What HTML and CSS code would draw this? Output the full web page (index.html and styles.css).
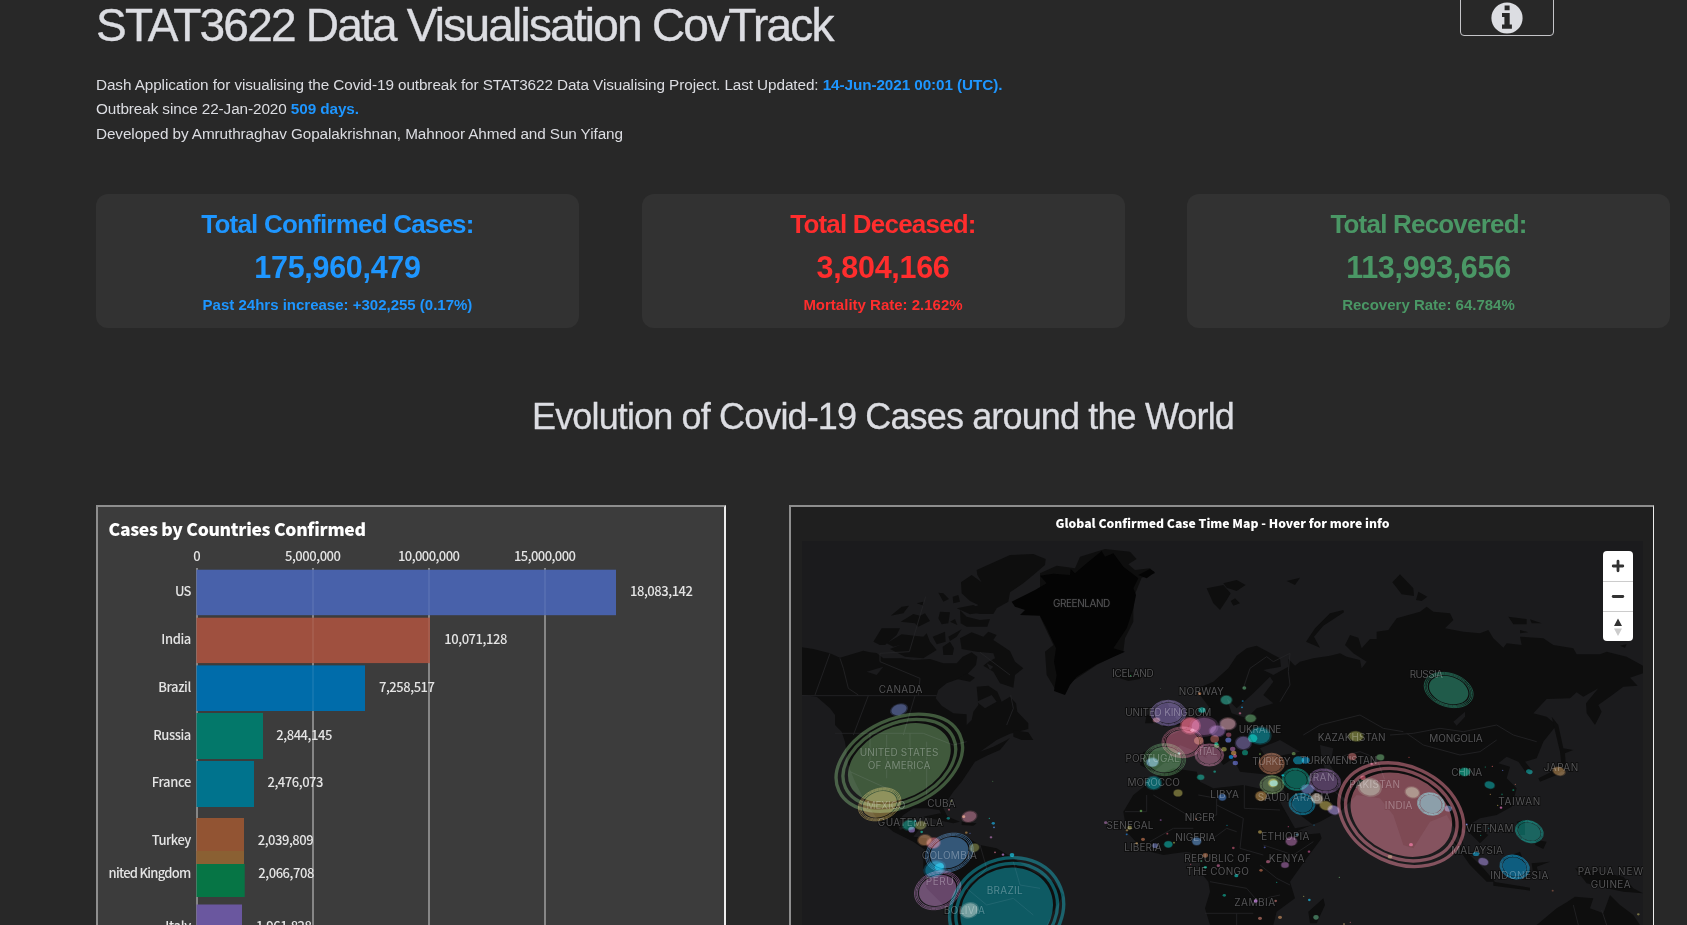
FILE: index.html
```html
<!DOCTYPE html>
<html lang="en">
<head>
<meta charset="utf-8">
<title>CovTrack</title>
<link rel="stylesheet" href="styles.css">
</head>
<body>
<main class="page">
  <header class="header">
    <div class="intro">
      <h1 class="title"><span>STAT3622 Data Visualisation CovTrack</span></h1>
      <p class="lead"><span>Dash Application for visualising the Covid-19 outbreak for STAT3622 Data Visualising Project. Last Updated: <b>14-Jun-2021 00:01 (UTC).</b></span><br><span>Outbreak since 22-Jan-2020 <b>509 days.</b></span><br><span>Developed by Amruthraghav Gopalakrishnan, Mahnoor Ahmed and Sun Yifang</span></p>
    </div>
    <button class="info" aria-label="Information">
      <svg width="32" height="32" viewBox="0 0 32 32"><circle cx="16" cy="16" r="15.6" fill="#dcdde2"/><path d="M13.6 3.6h5v4.6h-5zM11 11h7.7v11.6h2.2v4.1H11v-4.1h2.4v-7.5H11z" fill="#282828"/></svg>
    </button>
  </header>

  <section class="cards">
    <article class="card blue"><h2>Total Confirmed Cases:</h2><strong>175,960,479</strong><p>Past 24hrs increase: +302,255 (0.17%)</p></article>
    <article class="card red"><h2>Total Deceased:</h2><strong>3,804,166</strong><p>Mortality Rate: 2.162%</p></article>
    <article class="card green"><h2>Total Recovered:</h2><strong>113,993,656</strong><p>Recovery Rate: 64.784%</p></article>
  </section>

  <h2 class="heading"><span>Evolution of Covid-19 Cases around the World</span></h2>

  <section class="panels">
    <div class="panel chart">
      <svg width="626" height="440" viewBox="98 507 626 440">
        <defs><clipPath id="plot"><rect x="109" y="507" width="620" height="440"/></clipPath></defs>
        <text class="chart-title" x="108.500" y="535.7" textLength="257.500">Cases by Countries Confirmed</text>
        <g stroke="#868686" stroke-width="2"><path d="M197 568v380M313 568v380M429 568v380M545 568v380"/></g>
        <g>
          <rect x="196.500" y="569.7" width="419.500" height="45.500" fill="#4861aa"/>
          <rect x="196.500" y="617.700" width="233.500" height="45.400" fill="#9f503f"/>
          <rect x="196.500" y="665.400" width="168.500" height="45.600" fill="#006caa"/>
          <rect x="196.500" y="713" width="66.500" height="46" fill="#03786a"/>
          <rect x="196.500" y="761" width="57.500" height="46" fill="#00738d"/>
          <rect x="196.500" y="818" width="47.500" height="46" fill="#925433"/>
          <rect x="196.500" y="864" width="48.200" height="33" fill="#067545"/>
          <rect x="196.500" y="851" width="47.500" height="13" fill="#8a6033"/>
          <rect x="196.500" y="904.500" width="45.500" height="40" fill="#6a579f"/>
        </g>
        <g fill="none" stroke="#fff" stroke-opacity=".07" stroke-width="2"><path d="M313 570v45M429 570v45M545 570v45M313 618v45M429 618v45M313 666v45"/></g>
        <g class="mid"><text x="197" y="561">0</text><text x="313" y="561" textLength="56">5,000,000</text><text x="429" y="561" textLength="62">10,000,000</text><text x="545" y="561" textLength="62">15,000,000</text></g>
        <g class="names" clip-path="url(#plot)">
          <text x="191.300" y="596.300" textLength="16.300">US</text><text x="191.300" y="644" textLength="30">India</text><text x="191.300" y="692" textLength="33">Brazil</text><text x="191.300" y="740" textLength="38">Russia</text><text x="191.300" y="787.300" textLength="39.500">France</text><text x="191.300" y="845" textLength="39.500">Turkey</text><text x="191.300" y="878" textLength="91.500">United Kingdom</text><text x="191.300" y="931" textLength="26">Italy</text>
        </g>
        <g class="values">
          <text x="630" y="596.300" textLength="63">18,083,142</text><text x="444.300" y="644" textLength="63">10,071,128</text><text x="379" y="692" textLength="56">7,258,517</text><text x="276.300" y="740" textLength="56">2,844,145</text><text x="267.500" y="787.300" textLength="56">2,476,073</text><text x="257.700" y="845" textLength="56">2,039,809</text><text x="258.300" y="878" textLength="56">2,066,708</text><text x="256" y="931" textLength="56">1,961,828</text>
        </g>
      </svg>
    </div>

    <div class="panel map-panel">
      <h3>Global Confirmed Case Time Map - Hover for more info</h3>
      <div class="map">
        <svg width="841" height="384" viewBox="66 138 2523 1152">
          <g class="land">
            <path d="M66 457L100 462 150 475 180 488 215 478 250 467 270 472 290 474 310 490 365 490 400 495 450 492 490 505 530 505 548 485 575 472 592 485 588 510 560 540 535 552 500 565 475 585 467 610 485 632 520 655 560 658 560 690 575 675 580 650 595 630 590 575 625 572 652 590 665 620 690 605 708 625 712 650 745 685 745 702 690 716 650 735 600 770 640 755 680 735 690 728 660 765 620 782 585 800 565 830 545 860 520 890 500 920 490 940 505 970 495 980 478 945 440 940 400 940 370 960 350 985 360 1005 400 990 420 1000 400 1025 440 1030 440 1060 470 1070 450 1075 400 1040 340 1010 290 970 250 910 225 860 205 810 195 740 185 710 165 690 165 660 150 640 110 605 66 600Z"/>
            <path d="M700 705L745 712 760 735 725 735 700 725ZM430 1070L480 1035 540 1015 600 1050 650 1060 700 1090 760 1130 820 1160 850 1200 820 1250 800 1290 520 1290 500 1240 440 1180 430 1130ZM430 965L480 955 540 980 520 985ZM545 980L590 985 580 992 545 990Z"/>
            <path d="M590 225L650 198 690 180 760 177 797 192 795 210 760 240 730 265 690 292 685 320 650 340 640 357 600 357 560 350 595 330 570 318 545 295 543 262 575 240 605 262 592 240ZM320 445L365 418 430 425 440 415 450 440 470 465 430 490 375 485 330 462 360 450 340 455ZM280 440L305 400 360 400 350 420 315 450 300 450ZM332 362L365 335 387 332 370 355ZM362 380L400 357 420 362 435 355 450 378 415 395 405 385ZM475 293L490 295 507 312 490 320ZM518 305L535 300 540 320 520 325ZM475 370L480 350 510 352 505 385 485 388ZM510 380L525 372 532 390ZM540 345L560 365 600 375 630 372 622 395 560 395 542 385ZM458 425L495 410 497 440 470 448ZM505 425L545 403 530 425 510 438ZM488 455L510 440 522 460 518 480 490 480ZM410 325L430 320 432 332ZM530 340L580 330 620 350 570 358ZM540 430L575 412 610 425 625 410 650 420 640 435 690 468 705 500 730 520 705 540 700 578 660 565 640 530 610 512 625 500 645 490 640 475 590 470 545 462ZM530 552L560 535 585 548 570 560Z"/>
            <path d="M780 235L830 212 885 220 900 185 975 162 1050 170 1070 192 1045 208 1065 225 1110 220 1125 235 1085 248 1060 310 1060 380 1035 430 1030 470 950 510 830 590 800 540 795 470 820 450 780 365Z"/>
            <path d="M1010 535L1050 530 1090 538 1080 552 1045 558 1020 550ZM1280 280L1330 270 1352 295 1340 315 1320 345 1300 325ZM1330 265L1370 255 1397 270 1370 288 1340 278ZM1352 318L1365 310 1380 325 1360 332ZM1520 258L1560 248 1545 270ZM1690 345L1650 355 1605 400 1578 440 1620 458 1602 425 1630 392 1692 352ZM1837 262L1860 238 1900 280 1902 303 1865 298ZM1908 315L1915 290 1942 305 1925 318ZM2185 365L2240 372 2240 388 2200 388ZM2250 373L2285 385 2255 385ZM2220 405L2245 412 2220 415ZM2520 452L2540 448 2535 458Z"/>
            <path d="M1260 600L1230 590 1300 560 1345 520 1370 482 1400 460 1430 452 1500 490 1503 515 1450 525 1480 540 1525 515 1525 492 1545 512 1560 500 1600 490 1650 482 1680 475 1700 485 1740 495 1745 520 1760 500 1720 475 1695 450 1710 420 1735 428 1745 460 1770 432 1790 432 1790 410 1825 405 1850 370 1920 350 1940 335 1960 350 2010 355 2020 375 1995 400 2050 410 2100 415 2125 405 2140 430 2170 458 2180 445 2225 450 2220 425 2290 430 2320 450 2380 460 2390 478 2460 478 2480 470 2540 485 2589 512 2589 535 2550 548 2573 572 2530 575 2500 598 2455 630 2465 650 2445 690 2420 655 2418 625 2455 580 2410 605 2390 592 2370 610 2300 612 2260 655 2300 665 2330 690 2290 740 2270 790 2235 800 2255 825 2240 835 2215 800 2180 785 2155 805 2190 815 2180 850 2210 880 2195 935 2150 960 2100 970 2075 985 2125 1020 2100 1045 2070 1015 2045 1000 2050 1050 2085 1085 2060 1075 2030 1010 2000 960 1950 980 1900 1060 1870 1050 1840 960 1800 910 1730 900 1685 945 1620 980 1545 1010 1500 930 1480 880 1470 840 1380 830 1360 790 1330 810 1300 770 1265 740 1280 790 1250 770 1200 750 1170 790 1120 830 1080 810 1090 770 1160 765 1150 730 1220 700 1250 660 1290 640Z"/>
            <path d="M1130 640L1160 620 1180 660 1205 690 1150 695ZM1100 660L1125 655 1120 685 1095 685ZM1135 840L1180 820 1250 830 1260 860 1300 880 1390 870 1480 890 1500 930 1550 1000 1560 1020 1620 1015 1625 1030 1580 1090 1530 1160 1545 1210 1490 1250 1480 1290 1290 1290 1275 1240 1290 1190 1285 1160 1260 1130 1260 1080 1220 1070 1150 1080 1090 1065 1040 1010 1030 950 1060 900ZM1585 1250L1630 1210 1635 1230 1610 1285 1590 1285Z"/>
            <path d="M2315 665L2335 690 2350 760 2380 765 2355 775 2358 820 2330 840 2280 860 2275 850 2345 815 2340 770ZM2010 1025L2060 1070 2110 1120 2145 1160 2120 1160 2070 1110ZM2140 1160L2250 1178 2250 1187 2140 1172ZM2170 1090L2220 1070 2240 1120 2200 1150 2170 1130ZM2210 980L2235 975 2235 1020 2220 1020ZM2270 1035L2300 1040 2290 1062 2265 1050ZM2255 1105L2310 1100 2270 1115 2280 1145 2260 1140ZM2385 1120L2450 1128 2530 1145 2560 1180 2590 1195 2530 1190 2480 1180 2420 1165ZM2270 1290L2330 1240 2360 1222 2385 1205 2440 1210 2430 1240 2470 1255 2490 1200 2520 1230 2560 1260 2580 1290Z"/>
          </g>
          <path class="ice" d="M695 320L740 298 765 285 800 265 780 242 820 236 870 240 872 222 885 235 920 205 965 168 975 185 1000 175 1030 215 1075 250 1060 280 1068 300 1060 340 1040 400 1020 430 1000 460 1035 470 950 508 890 545 870 570 855 600 822 588 830 540 822 500 828 460 800 400 780 362 720 360 735 345 705 335ZM1075 240L1110 222 1125 232 1100 250Z"/>
          <g class="sea">
            <path d="M1355 655L1340 610 1370 640 1420 595 1470 545 1480 560 1450 600 1480 625 1430 640 1400 670ZM260 530L310 515 290 540ZM590 620L635 600 650 620 615 640ZM620 505L640 515 630 525ZM1440 760L1500 735 1560 770 1460 790ZM1620 750L1660 760 1650 810 1670 840 1640 840 1625 790ZM1500 870L1560 960 1600 990 1545 1000 1500 920ZM1655 880L1700 915 1690 920ZM2020 680L2055 650 2055 665 2030 692Z"/>
          </g>
          <g class="borders">
            <path d="M150 475L105 600M66 602H470M180 490L190 520 205 580 235 600M265 602L220 720M405 602L370 720M300 475L300 500 420 550 415 602M437 305L388 470 300 475M600 472L690 540M692 600L700 640 680 690M165 715H430L520 750 560 740M270 710V800M320 720V850M390 715V830M210 830L320 880M440 740V900M1390 580L1410 520 1460 485 1480 500 1530 475M1530 475L1525 530 1530 570 1500 620M1830 720L1900 715 1980 700 2050 710 2150 690 2200 720 2270 740M1880 715L1930 750 2040 780 2100 770 2150 735M1570 720L1620 690 1740 660 1810 700 1870 710M1660 790L1740 770 1790 790 1820 870"/>
            <path d="M1120 900L1240 970 1310 960 1310 910 1255 900M1393 870V940L1500 945M1310 930L1390 970 1380 1060 1450 1080M1035 950H1100V900M1110 1040L1180 1000 1240 1000M1300 1030L1340 1000 1370 1010M1290 1160L1400 1180 1430 1215 1500 1200M1275 1255H1420M1370 1255V1290M1450 1050L1540 1080 1600 1040M1440 1110L1490 1150 1530 1170M600 1050L620 1120 560 1180 620 1230 700 1210 760 1260M700 1100L720 1170 780 1180M2380 1230L2395 1290M2465 1245L2480 1290"/>
          </g>
          <g class="labels">
            <text x="905" y="336" textLength="172">GREENLAND</text><text x="362" y="594" textLength="131">CANADA</text><text x="1059" y="545" textLength="125">ICELAND</text><text x="1264" y="600" textLength="135">NORWAY</text><text x="1939" y="549" textLength="100">RUSSIA</text><text x="1165" y="663" textLength="258">UNITED KINGDOM</text><text x="1440" y="715" textLength="128">UKRAINE</text><text x="1715" y="737" textLength="203">KAZAKHSTAN</text><text x="2028" y="740" textLength="160">MONGOLIA</text>
            <text x="357" y="784" textLength="236">UNITED STATES</text><text x="357" y="821" textLength="188">OF AMERICA</text><text x="318" y="941" textLength="117">MEXICO</text><text x="484" y="937" textLength="85">CUBA</text><text x="391" y="994" textLength="195">GUATEMALA</text><text x="508" y="1091" textLength="165">COLOMBIA</text><text x="479" y="1169" textLength="84">PERU</text><text x="674" y="1198" textLength="108">BRAZIL</text><text x="553" y="1256" textLength="124">BOLIVIA</text>
            <text x="1118" y="801" textLength="163">PORTUGAL</text><text x="1285" y="779" textLength="54">ITAL</text><text x="1121" y="873" textLength="157">MOROCCO</text><text x="1474" y="810" textLength="115">TURKEY</text><text x="1676" y="807" textLength="232">TURKMENISTAN</text><text x="1626" y="858" textLength="75">IRAN</text><text x="1784" y="878" textLength="152">PAKISTAN</text><text x="2060" y="843" textLength="93">CHINA</text><text x="1856" y="942" textLength="83">INDIA</text><text x="2343" y="829" textLength="104">JAPAN</text><text x="2218" y="930" textLength="126">TAIWAN</text>
            <text x="1542" y="917" textLength="218">SAUDI ARABIA</text><text x="1334" y="908" textLength="86">LIBYA</text><text x="1259" y="977" textLength="90">NIGER</text><text x="1050" y="1002" textLength="141">SENEGAL</text><text x="1246" y="1039" textLength="120">NIGERIA</text><text x="1516" y="1034" textLength="145">ETHIOPIA</text><text x="1089" y="1068" textLength="112">LIBERIA</text><text x="1313" y="1101" textLength="200">REPUBLIC OF</text><text x="1313" y="1139" textLength="187">THE CONGO</text><text x="1520" y="1101" textLength="107">KENYA</text><text x="1424" y="1233" textLength="123">ZAMBIA</text>
            <text x="2129" y="1012" textLength="143">VIETNAM</text><text x="2091" y="1078" textLength="155">MALAYSIA</text><text x="2218" y="1152" textLength="175">INDONESIA</text><text x="2491" y="1140" textLength="196">PAPUA NEW</text><text x="2492" y="1178" textLength="120">GUINEA</text>
          </g>
          <g id="bubbles" class="bubbles"></g>
        </svg>
        <div class="controls">
          <span><svg width="30" height="30" viewBox="0 0 30 30"><path d="M15 10.200v9.600M10.200 15h9.600" stroke="#333" stroke-width="2.800" stroke-linecap="round"/></svg></span>
          <span><svg width="30" height="29" viewBox="0 0 30 29"><path d="M10.200 14.500h9.600" stroke="#333" stroke-width="2.800" stroke-linecap="round"/></svg></span>
          <span><svg width="30" height="29" viewBox="0 0 30 29"><path d="M11 14l4-7.500 4 7.500z" fill="#333"/><path d="M11 16.500l4 7.500 4-7.500z" fill="#ccc"/></svg></span>
        </div>
      </div>
    </div>
  </section>
</main>
<script src="bubbles.js"></script>
</body>
</html>
```
FILE: styles.css
```css
* { box-sizing: border-box; }
html { overflow: hidden; background: #282828; }
body { margin: 0; height: 925px; overflow: hidden; background: #282828; color: #dcdde2; font-family: "Liberation Sans", Arial, sans-serif; }
.page { width: 1574px; margin-left: 96px; }
.header { display: flex; justify-content: space-between; height: 194px; }
.title { margin: 0; height: 70px; font-size: 46px; font-weight: 400; line-height: 51px; letter-spacing: -1.790px; white-space: nowrap; -webkit-text-stroke: .4px #dcdde2; }
.lead { margin: 2.800px 0 0; font-size: 15.300px; line-height: 24.600px; letter-spacing: -.09px; white-space: nowrap; }
.lead b { color: #1e96ff; }
.info { width: 94px; height: 42px; margin: -6px 116px 0 0; padding: 5px 0 0; border: 1px solid #c4c4c8; border-radius: 4px; background: none; display: flex; justify-content: center; align-items: center; }
.cards { display: grid; grid-template-columns: repeat(3, 483px); justify-content: space-between; height: 134px; }
.card { border-radius: 12px; background: #323232; text-align: center; font-weight: 700; white-space: nowrap; }
.card h2 { margin: 15px 0 0; font-size: 26px; line-height: 30px; letter-spacing: -.8px; }
.card strong { display: block; margin-top: 11px; font-size: 30.500px; line-height: 34px; letter-spacing: -.3px; }
.card p { margin: 12px 0 0; font-size: 15px; line-height: 18px; }
.blue { color: #1e96ff; }
.red { color: #ff2d2d; }
.green { color: #4a9765; }
.heading { margin: 65px 0 0; height: 112px; font-size: 36px; font-weight: 400; line-height: 48px; letter-spacing: -.860px; text-align: center; white-space: nowrap; -webkit-text-stroke: .3px #dcdde2; }
.panels { display: flex; gap: 63px; }
.panel { height: 444px; border: 2px solid; border-color: #8e8e8e #ececec #ececec #8e8e8e; overflow: hidden; }
.panel svg { display: block; }
.chart { width: 630px; background: #3c3c3c; font: 500 13px "Noto Sans CJK SC", "Noto Sans", sans-serif; }
.chart text { fill: #e4e4e4; }
.chart .chart-title { font-size: 17.500px; font-weight: 900; fill: #fff; }
.mid { text-anchor: middle; }
.names { text-anchor: end; }
.map-panel { width: 865px; border-right-width: 1px; padding: 0 10px 0 11px; background: #1f1f1f; }
.map-panel h3 { margin: 0; height: 34px; color: #fff; font: 900 12.200px/32px "Noto Sans CJK SC", "Noto Sans", sans-serif; text-align: center; white-space: nowrap; }
.map { position: relative; width: 841px; background: #1b1b1d; }
.land { fill: #0e0e0e; }
.ice { fill: #040404; }
.sea { fill: #1b1b1d; }
.borders { fill: none; stroke: #242426; stroke-width: 2.500; }
.labels { font: 30px Inter, sans-serif; fill: #555557; text-anchor: middle; stroke: #0b0b0b; stroke-width: 5; paint-order: stroke; }
.bubbles ellipse { mix-blend-mode: screen; }
.controls { position: absolute; top: 10px; right: 10px; width: 30px; height: 90px; border-radius: 4px; background: #fff; overflow: hidden; }
.controls span { display: block; height: 30px; }
.controls span + span { border-top: 1px solid #ccc; }
```
FILE: bubbles.js
```javascript
// Each bubble: centre x, centre y, half width, half height, tilt, colour, ring count
const bubbles = [
  [358, 803, 206, 135, -25, '#354f31', 2],
  [680, 1246, 181, 157, -28, '#00505a', 2],
  [1864, 959, 201, 150, 25, '#763f4a', 2],
  [2006, 585, 77, 51, 18, '#13523f', 3],
  [299, 928, 67, 48, -20, '#69582b', 3],
  [508, 1073, 75, 57, -22, '#284d70', 3],
  [473, 1186, 73, 57, -22, '#5e3c61', 3],
  [1165, 654, 54, 39, 0, '#4d3f6c', 3],
  [1208, 742, 63, 47, 0, '#71374a', 3],
  [1154, 794, 64, 49, 0, '#315634', 3],
  [1288, 780, 44, 34, 0, '#66394f', 3],
  [1272, 694, 44, 31, 0, '#5a345e', 1],
  [1231, 692, 32, 27, 0, '#c8405a', 1],
  [1475, 806, 39, 32, 0, '#673d2b', 3],
  [1548, 853, 42, 34, 8, '#00564a', 3],
  [1634, 858, 49, 37, 10, '#493357', 3],
  [1566, 927, 40, 33, 8, '#004c65', 3],
  [1440, 722, 35, 28, 0, '#005f6c', 1],
  [1476, 869, 37, 28, 0, '#3b5230', 3],
  [1390, 744, 26, 22, 0, '#4c4070', 1],
  [1343, 687, 28, 20, 0, '#553d58', 1],
  [1344, 686, 25, 20, 0, '#4a3020', 1],
  [1312, 708, 26, 19, 0, '#5c3e75', 1],
  [1953, 927, 42, 34, 15, '#1b7880', 3],
  [1897, 892, 24, 18, 15, '#64745a', 1],
  [1769, 877, 37, 29, 10, '#52705c', 1],
  [2248, 1010, 44, 33, 20, '#00534c', 3],
  [2204, 1116, 46, 36, 18, '#005478', 3],
  [357, 644, 28, 18, -18, '#3c4979', 1],
  [568, 965, 25, 18, -15, '#754153', 1],
  [388, 990, 23, 17, -10, '#005c50', 1],
  [422, 991, 19, 14, -10, '#53582a', 1],
  [434, 1035, 23, 18, -10, '#7b5030', 1],
  [460, 1044, 23, 18, -10, '#8b3840', 1],
  [464, 1122, 35, 26, -20, '#005d80', 1],
  [478, 1115, 14, 10, -20, '#00608a', 0],
  [583, 1058, 17, 14, -15, '#53582a', 1],
  [568, 1246, 30, 24, -20, '#77746b', 1],
  [1221, 864, 0, 0, 0, '#000000', 0],
  [1117, 802, 20, 15, 0, '#4e7ba1', 1],
  [1129, 675, 12, 8, 0, '#7b4550', 1],
  [1121, 864, 26, 22, 0, '#00616a', 1],
  [1262, 847, 12, 9, 0, '#007060', 1],
  [1194, 894, 15, 12, 0, '#68652b', 1],
  [1327, 907, 13, 11, 0, '#284f8b', 1],
  [1339, 615, 19, 15, 0, '#167060', 1],
  [1266, 645, 12, 9, 0, '#008277', 1],
  [1412, 670, 18, 13, 0, '#38683f', 1],
  [1418, 730, 14, 12, 0, '#007466', 0],
  [1443, 903, 19, 16, 0, '#7e592a', 1],
  [1479, 864, 16, 14, 0, '#87862c', 1],
  [1481, 865, 12, 9, 0, '#007e9a', 0],
  [1583, 882, 22, 16, 0, '#44548c', 1],
  [1611, 911, 20, 17, 15, '#968879', 1],
  [1638, 932, 22, 15, 15, '#776a2c', 1],
  [1661, 945, 20, 15, 15, '#6d5c9b', 1],
  [1555, 796, 16, 12, 0, '#005c72', 0],
  [1577, 796, 12, 10, 0, '#005a80', 0],
  [1728, 724, 24, 17, 5, '#606429', 1],
  [1717, 785, 14, 12, 5, '#793a3a', 1],
  [1801, 787, 13, 10, 5, '#3c6a42', 1],
  [1534, 1039, 19, 15, 0, '#6b3e68', 1],
  [1515, 1110, 13, 10, 0, '#6a3e6e', 1],
  [1250, 1039, 15, 13, 0, '#365c8c', 1],
  [1165, 1048, 14, 11, 0, '#00726c', 1],
  [1125, 1052, 8, 7, 0, '#404874', 0],
  [1276, 1081, 8, 7, 0, '#73472f', 0],
  [1608, 1267, 8, 7, 0, '#34664b', 0],
  [2054, 831, 18, 14, 0, '#007b63', 1],
  [2129, 870, 17, 12, 15, '#006869', 1],
  [2248, 830, 10, 7, 15, '#006969', 0],
  [2337, 829, 21, 14, 15, '#76552e', 1],
  [2110, 1100, 17, 12, 18, '#5c4a88', 1],
  [2088, 1077, 10, 6, 0, '#006283', 0],
  [2005, 941, 11, 9, 10, '#405579', 0]
];
// Each dot: x, y, radius, colour
const dots = `514 918 3 #58622f,507 944 3 #873748,505 970 5 #006565,551 965 5 #aa6640,395 1004 10 #604c85,425 1011 4 #00806c,559 1013 4 #775522,570 1015 2 #334488,638 859 2 #224422,628 970 2 #008877,640 985 5 #007098,642 997 3 #305a99,633 1027 4 #774477,645 1072 3 #884455,669 1079 4 #885599,696 1080 7 #0088a0,406 978 3 #00a0a0,1052 542 2 #229944,1141 580 1 #668866,1259 596 5 #875432,1393 579 6 #336644,1388 618 3 #006699,1386 637 3 #006699,1380 655 4 #883d58,1345 735 9 #445499,1304 732 13 #6b3530,1346 719 8 #662d40,1256 737 14 #70402c,1237 706 6 #aa5060,1309 746 6 #007766,1310 752 8 #336633,1332 763 8 #66662c,1358 762 8 #6a3c68,1361 774 8 #87602e,1353 786 7 #0067aa,1366 804 8 #404890,1395 773 9 #006253,1365 783 6 #883d66,1440 777 3 #557733,1304 830 4 #007060,1197 775 4 #008877,1199 777 4 #884455,1541 776 6 #446633,1508 841 4 #0098aa,1749 848 8 #8a303f,1775 807 4 #8a304f,977 983 5 #68406a,1049 998 7 #686430,1083 948 4 #407733,1142 975 3 #663777,1248 972 3 #774433,1341 991 2 #006677,1440 1011 6 #776630,1551 1019 4 #406677,1525 995 2 #802d4d,1602 990 2 #006699,1041 1006 4 #776033,1040 1018 3 #004f99,1089 1033 6 #804930,1070 1045 4 #806030,1162 1016 3 #803040,1182 1043 3 #66702c,1360 1059 4 #803348,1454 1057 3 #373f88,1587 1070 4 #80305b,1464 1100 6 #803f58,1443 1126 5 #80452f,1369 1142 6 #007f7a,1276 1117 5 #008066,1315 1112 5 #803e60,1264 1098 3 #408066,1232 1108 2 #80303f,1333 1201 5 #006f60,1427 1218 6 #894aa0,1487 1218 4 #804a49,1490 1162 2 #007766,1571 1204 2 #707033,1588 1215 4 #0080a0,1678 1147 2 #447744,1440 1270 6 #804a40,1500 1267 6 #805530,1711 1282 2 #803d47,1692 1287 3 #80693f,1830 1085 7 #5a502e,1893 1049 6 #aa365c,1887 787 2 #883030,2137 814 2 #a04040,2116 816 2 #007755,2168 826 2 #405099,2206 868 2 #804433,2200 885 3 #007755,2166 898 3 #004433,2153 931 2 #807530,2163 938 4 #a04a84,2131 898 2 #806030,2060 988 3 #4455aa,2126 1000 2 #004f55,2102 1021 2 #006655,2318 1187 3 #5a3020,2575 1258 4 #66602c`;
const layer = document.getElementById('bubbles');
function ellipse(x, y, rx, ry, tilt, attrs) {
  const e = document.createElementNS('http://www.w3.org/2000/svg', 'ellipse');
  const all = { cx: x, cy: y, rx, ry, transform: `rotate(${tilt} ${x} ${y})`, ...attrs };
  for (const key in all) e.setAttribute(key, all[key]);
  layer.append(e);
}
for (const [x, y, a, b, tilt, color, rings] of bubbles) {
  const core = rings === 0 ? 1 : rings === 1 ? 0.84 : 0.79;
  ellipse(x, y, a * core, b * core, tilt, { fill: color, 'fill-opacity': rings === 1 ? 0.65 : 1 });
  if (rings === 1) ellipse(x, y, a, b, tilt, { fill: color, 'fill-opacity': 0.4 });
  const steps = rings === 2 ? [0.97, 0.865] : rings === 3 ? [0.98, 0.92, 0.86] : [];
  for (const s of steps) ellipse(x, y, a * s, b * s, tilt, { fill: 'none', stroke: color, 'stroke-width': rings === 2 ? 10 : 2.6 });
}
for (const dot of dots.split(',')) {
  const [x, y, r, color] = dot.split(' ');
  ellipse(+x, +y, +r, r * 0.85, 0, { fill: color });
}
```
